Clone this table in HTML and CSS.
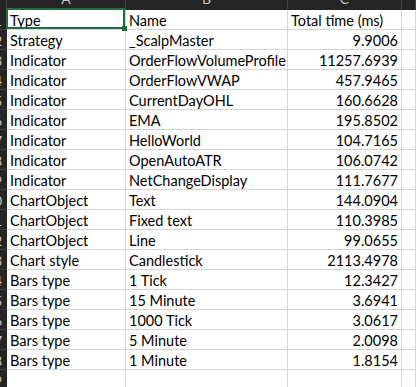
FILE: index.html
```html
<!DOCTYPE html>
<html lang="en">
<head>
  <meta charset="UTF-8">
  <meta name="viewport" content="width=device-width, initial-scale=1.0">
  <title>Sheet</title>
  <link rel="stylesheet" href="styles.css">
</head>
<body>

  <div class="sheet">
    <div class="corner"></div>
    <div class="col-head"><span>A</span></div>
    <div class="col-head"><span>B</span></div>
    <div class="col-head"><span>C</span></div>
    <div class="col-head last"></div>

    <div class="row-head">1</div>
    <div class="cell selected">Type</div>
    <div class="cell">Name</div>
    <div class="cell">Total time (ms)</div>
    <div class="cell"></div>

    <div class="row-head">2</div>
    <div class="cell">Strategy</div>
    <div class="cell">_ScalpMaster</div>
    <div class="cell num">9.9006</div>
    <div class="cell"></div>

    <div class="row-head">3</div>
    <div class="cell">Indicator</div>
    <div class="cell">OrderFlowVolumeProfile</div>
    <div class="cell num">11257.6939</div>
    <div class="cell"></div>

    <div class="row-head">4</div>
    <div class="cell">Indicator</div>
    <div class="cell">OrderFlowVWAP</div>
    <div class="cell num">457.9465</div>
    <div class="cell"></div>

    <div class="row-head">5</div>
    <div class="cell">Indicator</div>
    <div class="cell">CurrentDayOHL</div>
    <div class="cell num">160.6628</div>
    <div class="cell"></div>

    <div class="row-head">6</div>
    <div class="cell">Indicator</div>
    <div class="cell">EMA</div>
    <div class="cell num">195.8502</div>
    <div class="cell"></div>

    <div class="row-head">7</div>
    <div class="cell">Indicator</div>
    <div class="cell">HelloWorld</div>
    <div class="cell num">104.7165</div>
    <div class="cell"></div>

    <div class="row-head">8</div>
    <div class="cell">Indicator</div>
    <div class="cell">OpenAutoATR</div>
    <div class="cell num">106.0742</div>
    <div class="cell"></div>

    <div class="row-head">9</div>
    <div class="cell">Indicator</div>
    <div class="cell">NetChangeDisplay</div>
    <div class="cell num">111.7677</div>
    <div class="cell"></div>

    <div class="row-head">10</div>
    <div class="cell">ChartObject</div>
    <div class="cell">Text</div>
    <div class="cell num">144.0904</div>
    <div class="cell"></div>

    <div class="row-head">11</div>
    <div class="cell">ChartObject</div>
    <div class="cell">Fixed text</div>
    <div class="cell num">110.3985</div>
    <div class="cell"></div>

    <div class="row-head">12</div>
    <div class="cell">ChartObject</div>
    <div class="cell">Line</div>
    <div class="cell num">99.0655</div>
    <div class="cell"></div>

    <div class="row-head">13</div>
    <div class="cell">Chart style</div>
    <div class="cell">Candlestick</div>
    <div class="cell num">2113.4978</div>
    <div class="cell"></div>

    <div class="row-head">14</div>
    <div class="cell">Bars type</div>
    <div class="cell">1 Tick</div>
    <div class="cell num">12.3427</div>
    <div class="cell"></div>

    <div class="row-head">15</div>
    <div class="cell">Bars type</div>
    <div class="cell">15 Minute</div>
    <div class="cell num">3.6941</div>
    <div class="cell"></div>

    <div class="row-head">16</div>
    <div class="cell">Bars type</div>
    <div class="cell">1000 Tick</div>
    <div class="cell num">3.0617</div>
    <div class="cell"></div>

    <div class="row-head">17</div>
    <div class="cell">Bars type</div>
    <div class="cell">5 Minute</div>
    <div class="cell num">2.0098</div>
    <div class="cell"></div>

    <div class="row-head">18</div>
    <div class="cell">Bars type</div>
    <div class="cell">1 Minute</div>
    <div class="cell num">1.8154</div>
    <div class="cell"></div>

    <div class="row-head">19</div>
    <div class="cell"></div>
    <div class="cell"></div>
    <div class="cell"></div>
    <div class="cell"></div>
  </div>

</body>
</html>
```

FILE: styles.css
```css
* {
  box-sizing: border-box;
  margin: 0;
  padding: 0;
}

body {
  width: 416px;
  height: 387px;
  overflow: hidden;
  background: #fff;
  font-family: Lato, "Liberation Sans", sans-serif;
}

.sheet {
  display: grid;
  grid-template-columns: 7px 119px 162px 114px 14px;
  grid-template-rows: 10px;
  grid-auto-rows: 20px;
}

.corner,
.col-head {
  background: #252525;
  border-right: 1px solid #454545;
  overflow: hidden;
  display: flex;
  align-items: flex-end;
  justify-content: center;
}

.col-head span {
  font-size: 14px;
  line-height: 1;
  color: #c4c4c4;
  margin-bottom: 4px;
}

.row-head {
  background: #252525;
  border-bottom: 1px solid #3c3c3c;
  color: #c8c8c8;
  font-size: 13px;
  line-height: 20px;
  padding-top: 1px;
  padding-right: 5px;
  overflow: hidden;
  white-space: nowrap;
  direction: rtl;
}

.cell {
  position: relative;
  border-right: 1px solid #d4d4d4;
  border-bottom: 1px solid #d4d4d4;
  font-size: 14.5px;
  line-height: 17px;
  padding: 2px 3px 0;
  color: #000;
  white-space: nowrap;
}

.num {
  text-align: right;
}

.selected::after {
  content: "";
  position: absolute;
  left: -1px;
  top: -2px;
  right: 0;
  bottom: 0;
  border: 2px solid #1e6e42;
}

.selected::before {
  content: "";
  position: absolute;
  right: -2px;
  bottom: -2px;
  width: 5px;
  height: 5px;
  background: #1e6e42;
  z-index: 1;
}
```
